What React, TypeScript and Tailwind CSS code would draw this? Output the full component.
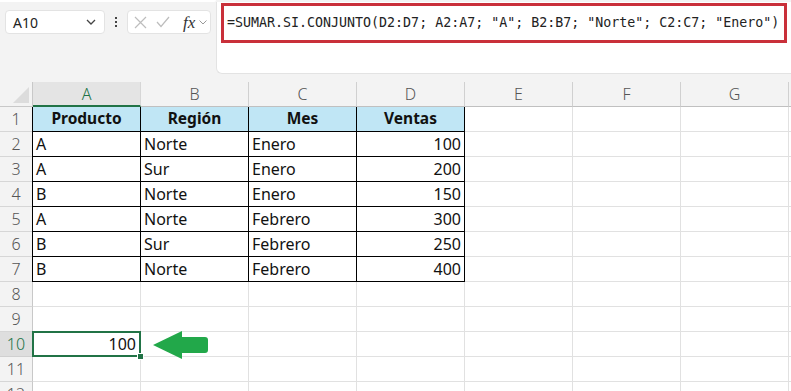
import React from "react";

const COLS = ["A", "B", "C", "D", "E", "F", "G"];
const DATA: string[][] = [
  ["Producto", "Región", "Mes", "Ventas"],
  ["A", "Norte", "Enero", "100"],
  ["A", "Sur", "Enero", "200"],
  ["B", "Norte", "Enero", "150"],
  ["A", "Norte", "Febrero", "300"],
  ["B", "Sur", "Febrero", "250"],
  ["B", "Norte", "Febrero", "400"],
];

function TopBar() {
  return (
    <div className="flex h-[82px]">
      <div className="w-[216px] flex flex-col">
        <div className="h-[2px] bg-white rounded-br-[4px]" />
        <div className="mt-[8px] flex items-center">
          <div className="ml-[5px] w-[100px] h-[24px] bg-white rounded-[4px] border border-[#e3e3e3] flex items-center justify-between pl-[7px] pr-[8px]">
            <span className="text-[14px] text-[#222] font-['Noto_Sans',sans-serif]">A10</span>
            <svg width="10" height="6" viewBox="0 0 10 6">
              <path d="M1 1 L5 5 L9 1" fill="none" stroke="#444" strokeWidth="1.3" />
            </svg>
          </div>
          <div className="w-[22px] flex flex-col items-center gap-[2px]">
            <div className="w-[2px] h-[2px] bg-[#444]" />
            <div className="w-[2px] h-[2px] bg-[#444]" />
            <div className="w-[2px] h-[2px] bg-[#444]" />
          </div>
          <div className="w-[84px] h-[24px] bg-white rounded-[4px] border border-[#e3e3e3] flex items-center pl-[6px]">
            <svg width="13" height="13" viewBox="0 0 13 13">
              <path d="M1 1 L12 12 M12 1 L1 12" stroke="#bdbdbd" strokeWidth="1.2" />
            </svg>
            <svg className="ml-[9px]" width="14" height="12" viewBox="0 0 14 12">
              <path d="M1 6 L5 10.5 L13 1" fill="none" stroke="#bdbdbd" strokeWidth="1.2" />
            </svg>
            <span className="ml-[13px] text-[17px] italic text-[#333] font-['Liberation_Serif',serif] leading-none">fx</span>
            <svg className="ml-[4px]" width="8" height="5" viewBox="0 0 8 5">
              <path d="M0.5 0.5 L4 4 L7.5 0.5" fill="none" stroke="#999" strokeWidth="1" />
            </svg>
          </div>
        </div>
      </div>
      <div className="flex-1 pt-[2px] pb-[8px]">
        <div className="h-full bg-white rounded-bl-[6px] border-l border-b border-[#e3e3e3] pl-[4px] pt-[1px] pr-[4px]">
          <div className="h-[40px] border-[3px] border-[#c9303a] flex items-center pl-[3px]">
            <span className="text-[13.3px] text-[#222] whitespace-pre font-['DejaVu_Sans_Mono',monospace]">
              =SUMAR.SI.CONJUNTO(D2:D7; A2:A7; "A"; B2:B7; "Norte"; C2:C7; "Enero")
            </span>
          </div>
        </div>
      </div>
    </div>
  );
}

function Grid() {
  const rows = Array.from({ length: 12 }, (_, i) => i + 1);
  return (
    <div className="relative grid grid-cols-[33px_repeat(7,108px)_1fr] auto-rows-[25px] font-['Noto_Sans',sans-serif]">
      {/* header row */}
      <div className="bg-[#f3f3f3] border-r border-b border-[#c8c8c8] flex items-end justify-end pr-[3px] pb-[3px]">
        <svg width="16" height="16" viewBox="0 0 16 16">
          <path d="M16 0 L16 16 L0 16 Z" fill="#dcdcdc" />
        </svg>
      </div>
      {COLS.map((c) =>
        c === "A" ? (
          <div key={c} className="bg-[#e4e4e4] border-r border-[#d6d6d6] border-b-2 border-b-[#217346] flex items-center justify-center text-[16px] font-light text-[#217346]">
            {c}
          </div>
        ) : (
          <div key={c} className="bg-[#f3f3f3] border-r border-b border-[#d0d0d0] border-b-[#c0c0c0] flex items-center justify-center text-[16px] font-light text-[#555]">
            {c}
          </div>
        )
      )}
      <div className="bg-[#f3f3f3] border-b border-[#c0c0c0]" />

      {rows.map((r) => (
        <React.Fragment key={r}>
          {r === 10 ? (
            <div className="bg-[#dedede] border-r border-b border-[#d0d0d0] flex items-center justify-center text-[16px] font-light text-[#217346]">
              {r}
            </div>
          ) : (
            <div className="bg-[#f3f3f3] border-r border-b border-[#d6d6d6] border-r-[#c8c8c8] flex items-center justify-center text-[16px] font-light text-[#555]">
              {r}
            </div>
          )}
          {COLS.map((c, ci) => {
            const inTable = r <= 7 && ci < 4;
            if (inTable) {
              const val = DATA[r - 1][ci];
              const leftEdge = ci === 0 ? " shadow-[-1px_0_0_#000]" : "";
              if (r === 1) {
                return (
                  <div key={c} className={"bg-[#c0e6f5] border-r border-b border-black flex items-center justify-center text-[15.5px] font-bold text-[#111]" + leftEdge}>
                    {val}
                  </div>
                );
              }
              if (ci === 3) {
                return (
                  <div key={c} className="bg-white border-r border-b border-black flex items-center justify-end pr-[3px] text-[16px] text-[#111]">
                    {val}
                  </div>
                );
              }
              return (
                <div key={c} className={"bg-white border-r border-b border-black flex items-center pl-[3px] text-[16px] text-[#111]" + leftEdge}>
                  {val}
                </div>
              );
            }
            if (r === 10 && ci === 0) {
              return (
                <div key={c} className="relative bg-white border-r border-b border-[#e1e1e1] flex items-center justify-end pr-[4px] text-[16px] text-[#111]">
                  100
                  <div className="absolute -left-[1px] -top-[1px] -right-[1px] -bottom-[1px] border-2 border-[#217346]" />
                  <div className="absolute -right-[4px] -bottom-[4px] w-[7px] h-[7px] bg-[#217346] border border-white" />
                </div>
              );
            }
            return <div key={c} className="bg-white border-r border-b border-[#e1e1e1]" />;
          })}
          <div className="bg-white border-b border-[#e1e1e1]" />
        </React.Fragment>
      ))}

      <svg className="absolute left-[153px] top-[249px]" width="56" height="28" viewBox="0 0 56 28">
        <path d="M0 14 L29 0 L29 6 L52 6 Q55 6 55 9 L55 19 Q55 22 52 22 L29 22 L29 28 Z" fill="#22a84a" />
      </svg>
    </div>
  );
}

export default function App() {
  return (
    <div className="w-[791px] h-[391px] overflow-hidden bg-[#f3f3f3]">
      <TopBar />
      <Grid />
    </div>
  );
}
